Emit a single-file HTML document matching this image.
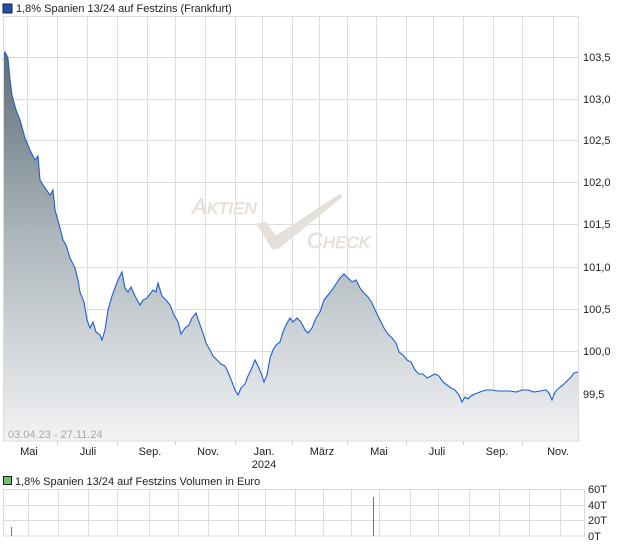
<!DOCTYPE html>
<html><head><meta charset="utf-8"><style>
html,body{margin:0;padding:0;background:#fff;width:620px;height:546px;overflow:hidden}
svg{display:block;font-family:"Liberation Sans",sans-serif}
</style></head><body>
<svg width="620" height="546" viewBox="0 0 620 546" xmlns="http://www.w3.org/2000/svg">
<defs>
<linearGradient id="g" x1="0" y1="52" x2="0" y2="441" gradientUnits="userSpaceOnUse">
<stop offset="0" stop-color="#56656f"/>
<stop offset="0.45" stop-color="#a4afb5"/>
<stop offset="1" stop-color="#f1f2f4"/>
</linearGradient>
</defs>
<rect x="3" y="4" width="9" height="9" fill="#1f4fb0" stroke="#222" stroke-width="1"/>
<text x="16" y="12" font-size="11" fill="#222">1,8% Spanien 13/24 auf Festzins (Frankfurt)</text>
<g stroke="#dcdcdc" stroke-width="1">
<path d="M27.5 16V441M57.5 16V441M87.5 16V441M117.5 16V441M147.5 16V441M175.5 16V441M205.5 16V441M235.5 16V441M262.5 16V441M292.5 16V441M319.5 16V441M347.5 16V441M376.5 16V441M406.5 16V441M433.5 16V441M463.5 16V441M493.5 16V441M522.5 16V441M553.5 16V441"/>
<path d="M3 57.5H578M3 99.5H578M3 140.5H578M3 182.5H578M3 224.5H578M3 267.5H578M3 309.5H578M3 351.5H578M3 394.5H578"/>
<rect x="3.5" y="16.5" width="575" height="424.5" fill="none"/>
</g>
<g fill="#e6e0da" font-style="italic" stroke="#e6e0da" stroke-width="0.6">
<text x="192" y="214" font-size="22">A<tspan font-size="17">KTIEN</tspan></text>
<text x="307" y="248" font-size="22">C<tspan font-size="17">HECK</tspan></text>
<path d="M257 224 L266 222 L276 236 L340 194 L342 197 L278 249 L272 249 Z"/>
</g>
<path d="M3 60 L5 52 L8 58 L10 80 L12 95 L16 110 L20 120 L25 138 L30 150 L35 160 L38 156 L40 180 L45 188 L50 195 L53 190 L55 210 L60 228 L63 240 L66 245 L70 258 L75 268 L78 280 L80 292 L84 302 L87 320 L90 328 L93 322 L96 332 L100 335 L102 340 L105 330 L108 310 L112 296 L116 285 L119 278 L122 272 L125 288 L128 292 L131 287 L135 296 L140 305 L143 300 L147 298 L150 294 L153 290 L156 292 L158 283 L162 296 L166 300 L170 305 L174 315 L178 322 L181 334 L185 328 L189 325 L192 318 L196 313 L199 322 L203 333 L206 343 L210 350 L213 356 L217 360 L221 364 L225 366 L228 372 L232 382 L235 390 L238 395 L241 388 L245 384 L248 376 L251 370 L255 360 L258 366 L261 373 L264 382 L267 375 L270 358 L273 350 L276 345 L280 342 L283 332 L286 325 L290 318 L293 322 L297 318 L301 322 L305 330 L308 333 L312 328 L316 318 L320 312 L324 300 L328 295 L332 290 L336 284 L340 278 L344 274 L348 278 L352 282 L356 280 L360 288 L364 293 L368 297 L372 303 L376 312 L380 320 L384 328 L388 334 L392 338 L396 343 L399 352 L403 355 L407 360 L411 362 L415 370 L419 374 L423 374 L427 378 L431 376 L435 374 L439 376 L443 382 L447 385 L451 388 L455 390 L459 395 L462 402 L465 397 L468 399 L471 396 L475 394 L480 392 L486 390 L492 390 L498 391 L504 391 L510 391 L516 392 L522 390 L528 390 L534 392 L540 391 L546 390 L549 393 L552 400 L555 392 L559 388 L563 385 L567 381 L571 377 L574 373 L578 372 L578 441 L3 441 Z" fill="url(#g)" opacity="0.95"/>
<path d="M3 60 L5 52 L8 58 L10 80 L12 95 L16 110 L20 120 L25 138 L30 150 L35 160 L38 156 L40 180 L45 188 L50 195 L53 190 L55 210 L60 228 L63 240 L66 245 L70 258 L75 268 L78 280 L80 292 L84 302 L87 320 L90 328 L93 322 L96 332 L100 335 L102 340 L105 330 L108 310 L112 296 L116 285 L119 278 L122 272 L125 288 L128 292 L131 287 L135 296 L140 305 L143 300 L147 298 L150 294 L153 290 L156 292 L158 283 L162 296 L166 300 L170 305 L174 315 L178 322 L181 334 L185 328 L189 325 L192 318 L196 313 L199 322 L203 333 L206 343 L210 350 L213 356 L217 360 L221 364 L225 366 L228 372 L232 382 L235 390 L238 395 L241 388 L245 384 L248 376 L251 370 L255 360 L258 366 L261 373 L264 382 L267 375 L270 358 L273 350 L276 345 L280 342 L283 332 L286 325 L290 318 L293 322 L297 318 L301 322 L305 330 L308 333 L312 328 L316 318 L320 312 L324 300 L328 295 L332 290 L336 284 L340 278 L344 274 L348 278 L352 282 L356 280 L360 288 L364 293 L368 297 L372 303 L376 312 L380 320 L384 328 L388 334 L392 338 L396 343 L399 352 L403 355 L407 360 L411 362 L415 370 L419 374 L423 374 L427 378 L431 376 L435 374 L439 376 L443 382 L447 385 L451 388 L455 390 L459 395 L462 402 L465 397 L468 399 L471 396 L475 394 L480 392 L486 390 L492 390 L498 391 L504 391 L510 391 L516 392 L522 390 L528 390 L534 392 L540 391 L546 390 L549 393 L552 400 L555 392 L559 388 L563 385 L567 381 L571 377 L574 373 L578 372" fill="none" stroke="#1d5fd0" stroke-width="1.1"/>
<rect x="3.5" y="16.5" width="575" height="424.5" fill="none" stroke="#dcdcdc"/>
<text x="8" y="438" font-size="11" fill="#a8a8a8">03.04.23 - 27.11.24</text>
<g font-size="11" fill="#222">
<text x="583" y="61">103,5</text><text x="583" y="103">103,0</text><text x="583" y="144">102,5</text><text x="583" y="186">102,0</text><text x="583" y="228">101,5</text><text x="583" y="271">101,0</text><text x="583" y="313">100,5</text><text x="583" y="355">100,0</text><text x="583" y="398">99,5</text>
</g>
<g stroke="#ccc"><path d="M57.5 441v4M117.5 441v4M175.5 441v4M235.5 441v4M292.5 441v4M347.5 441v4M406.5 441v4M463.5 441v4M522.5 441v4"/></g>
<g font-size="11" fill="#222" text-anchor="middle">
<text x="29" y="455">Mai</text><text x="88" y="455">Juli</text><text x="150" y="455">Sep.</text><text x="208" y="455">Nov.</text><text x="264" y="455">Jan.</text><text x="264" y="468">2024</text><text x="322" y="455">März</text><text x="379" y="455">Mai</text><text x="437" y="455">Juli</text><text x="497" y="455">Sep.</text><text x="558" y="455">Nov.</text>
</g>
<rect x="3.5" y="476.5" width="8" height="8" fill="#6cc36c" stroke="#222"/>
<text x="15" y="485" font-size="11" fill="#222">1,8% Spanien 13/24 auf Festzins Volumen in Euro</text>
<g stroke="#dcdcdc">
<path d="M28.5 489V536M58.5 489V536M88.5 489V536M117.5 489V536M149.5 489V536M178.5 489V536M208.5 489V536M238.5 489V536M265.5 489V536M295.5 489V536M323.5 489V536M351.5 489V536M379.5 489V536M410.5 489V536M438.5 489V536M469.5 489V536M499.5 489V536M529.5 489V536M560.5 489V536"/>
<path d="M3 505.5H585M3 520.5H585"/>
<rect x="3.5" y="489.5" width="581" height="46.5" fill="none"/>
</g>
<path d="M11.5 527V536M373.5 497V536" stroke="#d05050"/>
<g font-size="11" fill="#222">
<text x="588" y="493">60T</text><text x="588" y="509">40T</text><text x="588" y="524">20T</text><text x="588" y="540">0T</text>
</g>
</svg>
</body></html>
